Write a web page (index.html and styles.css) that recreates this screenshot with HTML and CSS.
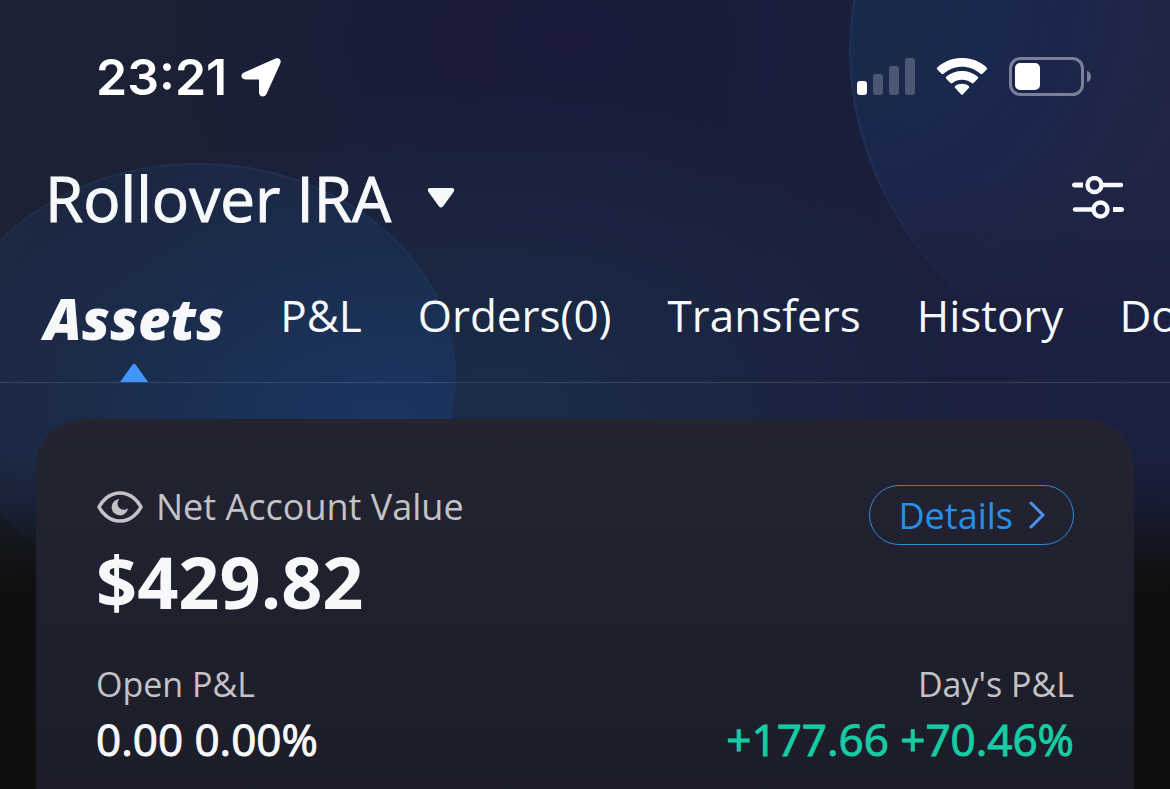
FILE: index.html
```html
<!DOCTYPE html>
<html lang="en">
<head>
<meta charset="utf-8">
<meta name="viewport" content="width=device-width, initial-scale=1">
<title>Rollover IRA</title>
<link rel="stylesheet" href="styles.css">
</head>
<body>
<div class="screen">
  <div class="glow glow-left"></div>
  <div class="glow glow-right"></div>
  <div class="fade"></div>

  <div class="status">
    <span class="time">23:21</span>
    <svg class="location" width="40" height="40" viewBox="0 0 40 40" aria-hidden="true"><path d="M3 15.500L34 1.800C38 .3 40.800 2.800 39.300 6.500L25.500 37C23.500 41 18 40 18 35.500V22.500H4.500C-.3 22.500 -1 17.300 3 15.500Z" fill="#fff"/></svg>
    <div class="indicators">
      <svg width="58" height="38" viewBox="0 0 58 38" aria-hidden="true"><rect x="0" y="23" width="10" height="14" rx="3" fill="#fff"/><g fill="#fff" fill-opacity=".22"><rect x="16" y="16" width="10" height="21" rx="3"/><rect x="32" y="8" width="10" height="29" rx="3"/><rect x="48" y="0" width="10" height="37" rx="3"/></g></svg>
      <svg width="52" height="38" viewBox="0 0 52 38" aria-hidden="true"><g fill="#fff"><path d="M1.300 9.500C15 -3.200 37 -3.200 50.700 9.500Q51.700 10.500 50.700 11.500L46.500 15.800Q45.500 16.600 44.500 15.800C34 6.300 18 6.300 7.500 15.800Q6.500 16.600 5.500 15.800L1.300 11.500Q.3 10.500 1.300 9.500Z"/><path d="M10.200 18.800C19 11 33 11 41.800 18.800Q42.800 19.800 41.800 20.800L37.500 25Q36.500 25.800 35.500 25C30 20.600 22 20.600 16.500 25Q15.500 25.800 14.500 25L10.200 20.800Q9.200 19.800 10.200 18.800Z"/><path d="M19.200 28C23 25 29 25 32.800 28Q33.800 29 32.800 30L27 36.300Q26 37.300 25 36.300L19.200 30Q18.200 29 19.200 28Z"/></g></svg>
      <svg width="82" height="40" viewBox="0 0 82 40" aria-hidden="true"><rect x="1.500" y="1.500" width="72" height="36" rx="10" fill="none" stroke="#fff" stroke-opacity=".42" stroke-width="3"/><rect x="6" y="6" width="25" height="27" rx="5" fill="#fff"/><path d="M78 13.500Q82 15.500 82 19.500Q82 23.500 78 25.500Z" fill="#fff" fill-opacity=".42"/></svg>
    </div>
  </div>

  <header class="header">
    <button class="account" type="button">Rollover IRA
      <svg width="28" height="20" viewBox="0 0 28 20" aria-hidden="true"><path d="M3 0H25Q28.500 .5 26.500 4L16 18.500Q14 20.500 12 18.500L1.500 4Q-.5 .5 3 0Z" fill="#f7f8fa"/></svg>
    </button>
    <button class="filter" type="button" aria-label="Settings">
      <svg width="52" height="44" viewBox="0 0 52 44" aria-hidden="true"><g fill="none" stroke="#f7f8fc" stroke-width="4.400"><circle cx="22.500" cy="9" r="7"/><circle cx="28.500" cy="33.500" r="7"/><path d="M30 9H49M3 33.500H21" stroke-linecap="round"/></g><path d="M3 6.500H11V11.500H3Q0 11.500 0 9Q0 6.500 3 6.500ZM41 31H49Q52 31 52 33.500Q52 36 49 36H41Z" fill="#f7f8fc"/></svg>
    </button>
  </header>

  <nav class="tabs">
    <a class="tab active" href="#assets" aria-current="page">Assets</a>
    <a class="tab" href="#pl">P&amp;L</a>
    <a class="tab" href="#orders">Orders(0)</a>
    <a class="tab" href="#transfers">Transfers</a>
    <a class="tab" href="#history">History</a>
    <a class="tab" href="#documents">Docs</a>
  </nav>

  <main class="card" id="assets">
    <div class="summary">
      <div>
        <div class="net">
          <svg width="48" height="32" viewBox="0 0 48 32" aria-hidden="true"><path d="M3 16C5.500 11 12.500 2 24 2S42.500 11 45 16C42.500 21 35.500 30 24 30S5.500 21 3 16Z" fill="none" stroke="#c3c3c7" stroke-width="3.600" stroke-linejoin="round"/><path d="M23.500 8A8.200 8.200 0 1 0 32 17.200A5.800 5.800 0 0 1 23.500 8Z" fill="#c3c3c7"/></svg>
          <h1 class="net-label">Net Account Value</h1>
        </div>
        <div class="net-value">$429.82</div>
      </div>
      <a class="details" href="#details">Details
        <svg width="16" height="28" viewBox="0 0 16 28" aria-hidden="true"><path d="M2 2L14 14L2 26" fill="none" stroke="#4c91f0" stroke-width="3" stroke-linecap="round" stroke-linejoin="round"/></svg>
      </a>
    </div>
    <dl class="stats">
      <div><dt>Open P&amp;L</dt><dd>0.00 0.00%</dd></div>
      <div class="day"><dt>Day's P&amp;L</dt><dd class="gain">+177.66 +70.46%</dd></div>
    </dl>
  </main>
</div>
</body>
</html>
```
FILE: styles.css
```css
* { box-sizing: border-box; }
body {
  margin: 0;
  background: #0f0f0f;
  color: #f7f8fa;
  font-family: "Open Sans", "Noto Sans", sans-serif;
}
svg { display: block; flex: none; }
a { color: inherit; text-decoration: none; }
button {
  padding: 0;
  border: 0;
  background: none;
  color: inherit;
  font: inherit;
}
.screen {
  position: relative;
  display: flex;
  flex-direction: column;
  min-height: 100vh;
  overflow: hidden;
  isolation: isolate;
  background:
    radial-gradient(460px 340px at 500px 420px, #1a2c4a 0%, rgba(26, 44, 74, 0) 100%),
    radial-gradient(420px 260px at 570px 40px, #191a3a 0%, rgba(25, 26, 58, 0) 100%),
    linear-gradient(90deg, #1c2133 0%, #1a1f38 50%, #1a2040 100%);
}

/* Backdrop */
.glow {
  position: absolute;
  z-index: -2;
  border-radius: 50%;
}
.glow-left {
  left: -60px;
  top: 163px;
  width: 516px;
  height: 428px;
  background: radial-gradient(ellipse at 84% 60%, rgba(26, 56, 104, .8) 0%, rgba(27, 50, 88, .6) 45%, rgba(30, 42, 76, .35) 100%);
  box-shadow: inset 0 2px 2px rgba(50, 90, 130, .2);
}
.glow-right {
  left: 849px;
  top: -322px;
  width: 892px;
  height: 744px;
  background: radial-gradient(circle 420px at 0 310px, rgba(24, 46, 78, .85) 0%, rgba(28, 40, 82, .75) 50%, rgba(34, 38, 68, .85) 85%);
  box-shadow: inset 2px 0 2px rgba(40, 90, 125, .25);
  -webkit-mask-image: linear-gradient(#000 500px, transparent 680px);
  mask-image: linear-gradient(#000 500px, transparent 680px);
}
.fade {
  position: absolute;
  z-index: -1;
  inset: 450px 0 0;
  background: linear-gradient(rgba(15, 15, 15, 0) 0, rgba(15, 15, 15, .25) 50px, #0f0f0f 135px);
}

/* Status bar */
.status {
  display: flex;
  align-items: center;
  gap: 14px;
  height: 60px;
  margin: 47px 79px 55px 96px;
}
.time {
  color: #fff;
  font: 600 50px/60px Inter, sans-serif;
}
.indicators {
  display: flex;
  align-items: center;
  gap: 21px;
  margin-left: auto;
}

/* Header */
.header {
  display: flex;
  align-items: center;
  justify-content: space-between;
  height: 72px;
  padding: 0 46px 0 45px;
}
.account {
  display: flex;
  align-items: center;
  gap: 36px;
  font-size: 62px;
  line-height: 72px;
  -webkit-text-stroke: 1px currentColor;
}

/* Tabs */
.tabs {
  display: flex;
  align-items: flex-start;
  gap: 56px;
  height: 149px;
  padding: 46px 0 0 44px;
  border-bottom: 1px solid rgba(255, 255, 255, .12);
  overflow: hidden;
  font-size: 44px;
  line-height: 70px;
}
.tab { flex: none; }
.active {
  position: relative;
  height: 102px;
  font-size: 56px;
  font-style: italic;
  font-weight: 800;
  line-height: 76px;
}
.active::after {
  content: "";
  position: absolute;
  bottom: 0;
  left: calc(50% - 14px);
  width: 28px;
  height: 18px;
  background: #4295fb;
  clip-path: polygon(46% 0, 54% 0, 100% 100%, 0 100%);
}

/* Account card */
.card {
  flex: 1;
  margin: 36px 36px 0;
  padding: 66px 60px 20px;
  border-radius: 48px 48px 0 0;
  background: linear-gradient(#232332, #1c1d29);
}
.summary {
  display: flex;
  align-items: flex-start;
  justify-content: space-between;
}
.net {
  display: flex;
  align-items: center;
  gap: 12px;
  color: #c3c3c7;
}
.net-label {
  margin: 0;
  font-size: 36px;
  font-weight: 400;
  line-height: 44px;
}
.net-value {
  margin-top: 2px;
  font-size: 72px;
  font-weight: 700;
  line-height: 100px;
}
.details {
  display: flex;
  align-items: center;
  gap: 16px;
  height: 60px;
  padding: 0 28px;
  border: 1px solid #2d8ad9;
  border-radius: 30px;
  color: #2490e8;
  font-size: 36px;
}
.stats {
  display: flex;
  justify-content: space-between;
  margin: 30px 0 0;
}
.stats dt {
  color: #c3c3c7;
  font-size: 34px;
  line-height: 46px;
}
.stats dd {
  margin: 2px 0 0;
  font-size: 44px;
  line-height: 60px;
  -webkit-text-stroke: 1px currentColor;
}
.day { text-align: right; }
.stats .gain { color: #17cca4; }
```
